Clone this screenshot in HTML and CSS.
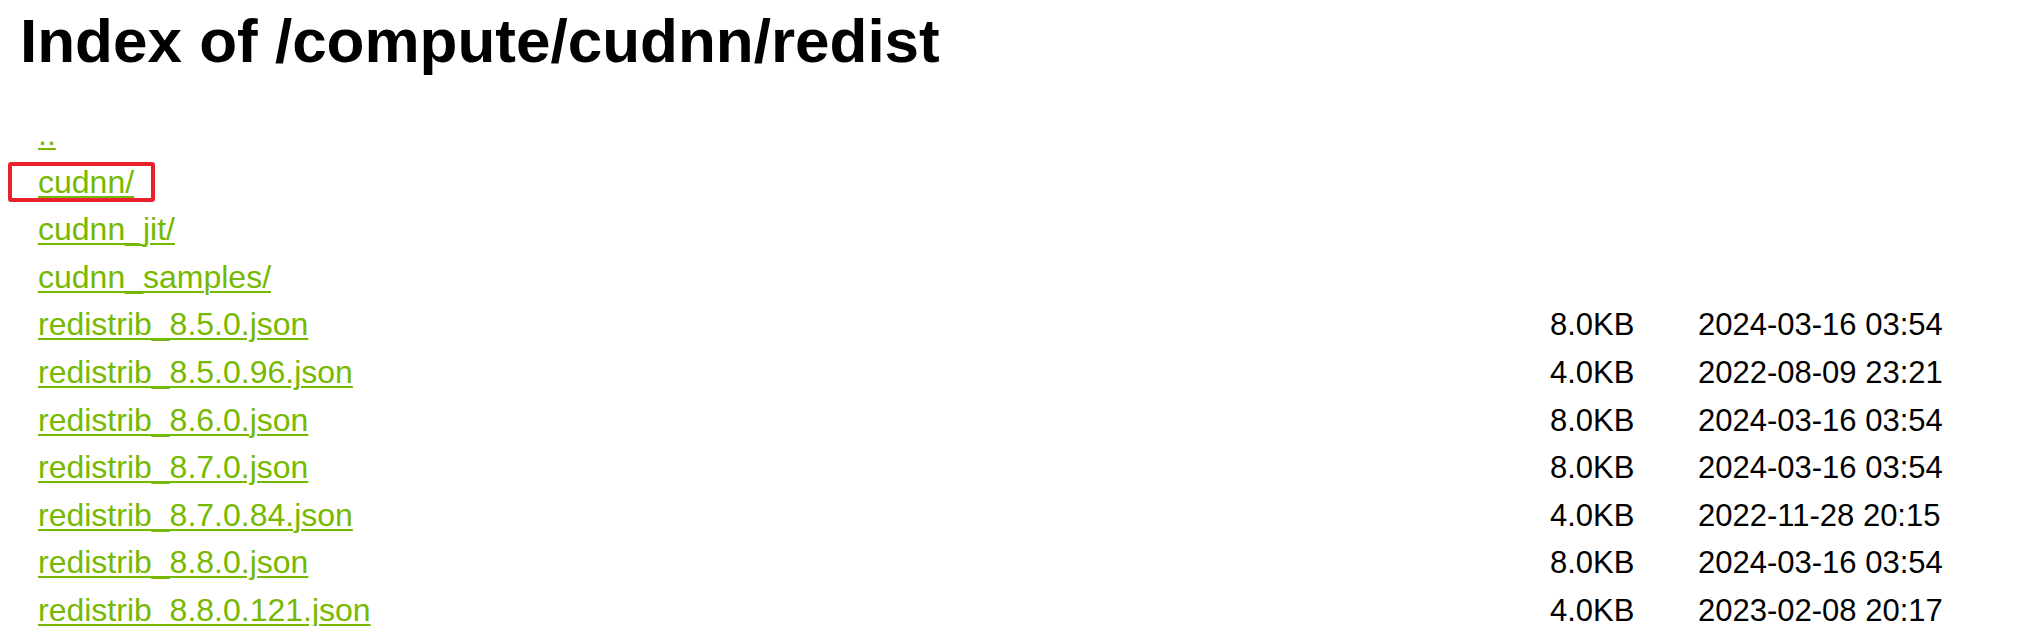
FILE: index.html
```html
<!DOCTYPE html>
<html lang="en">
<head>
<meta charset="utf-8">
<title>Index of /compute/cudnn/redist</title>
<link rel="stylesheet" href="styles.css">
</head>
<body>
<h1 class="title">Index of /compute/cudnn/redist</h1>
<div class="listing">
  <div class="row"><a class="name" href="#">..</a><span class="size"></span><span class="date"></span></div>
  <div class="row"><a class="name" href="#">cudnn/</a><span class="size"></span><span class="date"></span></div>
  <div class="row"><a class="name" href="#">cudnn_jit/</a><span class="size"></span><span class="date"></span></div>
  <div class="row"><a class="name" href="#">cudnn_samples/</a><span class="size"></span><span class="date"></span></div>
  <div class="row"><a class="name" href="#">redistrib_8.5.0.json</a><span class="size">8.0KB</span><span class="date">2024-03-16 03:54</span></div>
  <div class="row"><a class="name" href="#">redistrib_8.5.0.96.json</a><span class="size">4.0KB</span><span class="date">2022-08-09 23:21</span></div>
  <div class="row"><a class="name" href="#">redistrib_8.6.0.json</a><span class="size">8.0KB</span><span class="date">2024-03-16 03:54</span></div>
  <div class="row"><a class="name" href="#">redistrib_8.7.0.json</a><span class="size">8.0KB</span><span class="date">2024-03-16 03:54</span></div>
  <div class="row"><a class="name" href="#">redistrib_8.7.0.84.json</a><span class="size">4.0KB</span><span class="date">2022-11-28 20:15</span></div>
  <div class="row"><a class="name" href="#">redistrib_8.8.0.json</a><span class="size">8.0KB</span><span class="date">2024-03-16 03:54</span></div>
  <div class="row"><a class="name" href="#">redistrib_8.8.0.121.json</a><span class="size">4.0KB</span><span class="date">2023-02-08 20:17</span></div>
</div>
<div class="highlight"></div>
</body>
</html>
```
FILE: styles.css
```css
html, body {
  margin: 0;
  padding: 0;
  background: #ffffff;
  overflow: hidden;
}
body {
  font-family: "Liberation Sans", Arial, sans-serif;
  color: #000000;
  position: relative;
}
.title {
  margin: 0;
  padding: 4px 0 0 20px;
  font-size: 62px;
  line-height: 74px;
  font-weight: 700;
}
.listing {
  margin-top: 33px;
  padding-left: 38px;
  font-size: 31px;
  line-height: 47.6px;
}
.row {
  display: grid;
  grid-template-columns: 1512px 148px auto;
}
.name {
  color: #76b900;
  font-size: 32px;
  text-decoration: underline;
  text-decoration-thickness: 2px;
  text-underline-offset: 3px;
  justify-self: start;
}
.size, .date {
  color: #000000;
}
.highlight {
  position: absolute;
  left: 8px;
  top: 162px;
  width: 139px;
  height: 32px;
  border: 4px solid #e8212b;
  border-radius: 3px;
}
```
